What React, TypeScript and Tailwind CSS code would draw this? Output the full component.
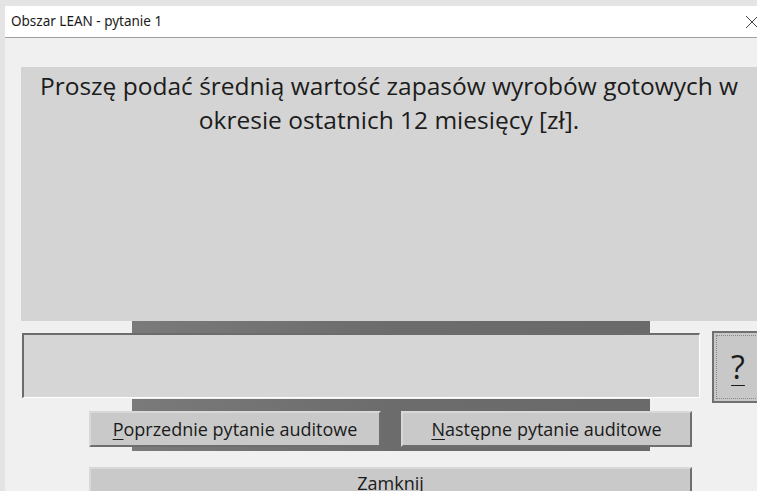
import { ReactNode } from "react";

const font = { fontFamily: "'Open Sans', 'DejaVu Sans', sans-serif" };

// Classic raised WinForms-style button with a mnemonic letter underlined
const RaisedButton = ({ children, className = "" }: { children: ReactNode; className?: string }) => (
  <div
    className={`flex items-center justify-center bg-[#c9c9c9] border-2 border-t-[#d8d8d8] border-l-[#d8d8d8] border-r-[#6e6e6e] border-b-[#6e6e6e] text-[18px] text-[#1a1a1a] ${className}`}
  >
    {children}
  </div>
);

export default function App() {
  return (
    <div className="w-[757px] h-[491px] overflow-hidden bg-[#e4e4e4] pt-[6px] pl-[5px]" style={font}>
      <div className="flex flex-col h-full bg-[#f0f0f0]">
        {/* title bar */}
        <div className="flex items-center justify-between h-[32px] bg-white border-b border-[#a0a0a0] pl-[6px] pr-[2px] shrink-0">
          <span className="text-[13.5px] text-[#1a1a1a]" style={{ fontFamily: "'Noto Sans', sans-serif" }}>
            Obszar LEAN - pytanie 1
          </span>
          <svg width="14" height="14" viewBox="0 0 14 14" className="mr-[-4px]">
            <path d="M1 1 L13 13 M13 1 L1 13" stroke="#444" strokeWidth="1" />
          </svg>
        </div>

        <div className="flex flex-col pl-[16px] pt-[29px]">
          {/* question panel */}
          <div className="h-[254px] bg-[#d4d4d4] pt-[2px] text-center text-[24.5px] leading-[34px] text-[#1c1c1c] whitespace-nowrap">
            Proszę podać średnią wartość zapasów wyrobów gotowych w
            <br />
            okresie ostatnich 12 miesięcy [zł].
          </div>

          {/* answer row */}
          <div className="relative flex items-start h-[78px]">
            <div className="absolute left-[111px] top-0 w-[518px] h-[12px] bg-gradient-to-r from-[#7a7a7a] via-[#6c6c6c] to-[#6a6a6a]" />
            <div className="relative mt-[12px] ml-[1px] w-[678px] h-[65px] shrink-0 bg-[#d6d6d6] border-t-2 border-l-2 border-t-[#6c6c6c] border-l-[#6c6c6c] border-r border-b border-r-white border-b-white" />
            <div className="relative ml-[12px] mt-[10px] w-[52px] h-[72px] shrink-0 bg-[#c8c8c8] border-2 border-[#707070] p-[2px]">
              <div className="flex items-center justify-center h-full border border-dotted border-[#888] text-[32px] text-[#1a1a1a]">
                <span className="underline underline-offset-[6px] decoration-1">?</span>
              </div>
            </div>
          </div>

          {/* navigation buttons over dark strip */}
          <div className="relative h-[52px]">
            <div className="absolute left-[111px] top-0 w-[518px] h-[52px] bg-gradient-to-r from-[#7a7a7a] via-[#6c6c6c] to-[#6a6a6a]" />
            <div className="relative flex gap-[20px] pl-[68px] pt-[12px]">
              <RaisedButton className="w-[292px] h-[36px]">
                <span>
                  <span className="underline underline-offset-[3px]">P</span>oprzednie pytanie auditowe
                </span>
              </RaisedButton>
              <RaisedButton className="w-[291px] h-[36px]">
                <span>
                  <span className="underline underline-offset-[3px]">N</span>astępne pytanie auditowe
                </span>
              </RaisedButton>
            </div>
          </div>

          <div className="pl-[68px] pt-[16px]">
            <RaisedButton className="w-[603px] h-[36px] items-start pt-[4px] leading-[20px]">
              Zamknij
            </RaisedButton>
          </div>
        </div>
      </div>
    </div>
  );
}
